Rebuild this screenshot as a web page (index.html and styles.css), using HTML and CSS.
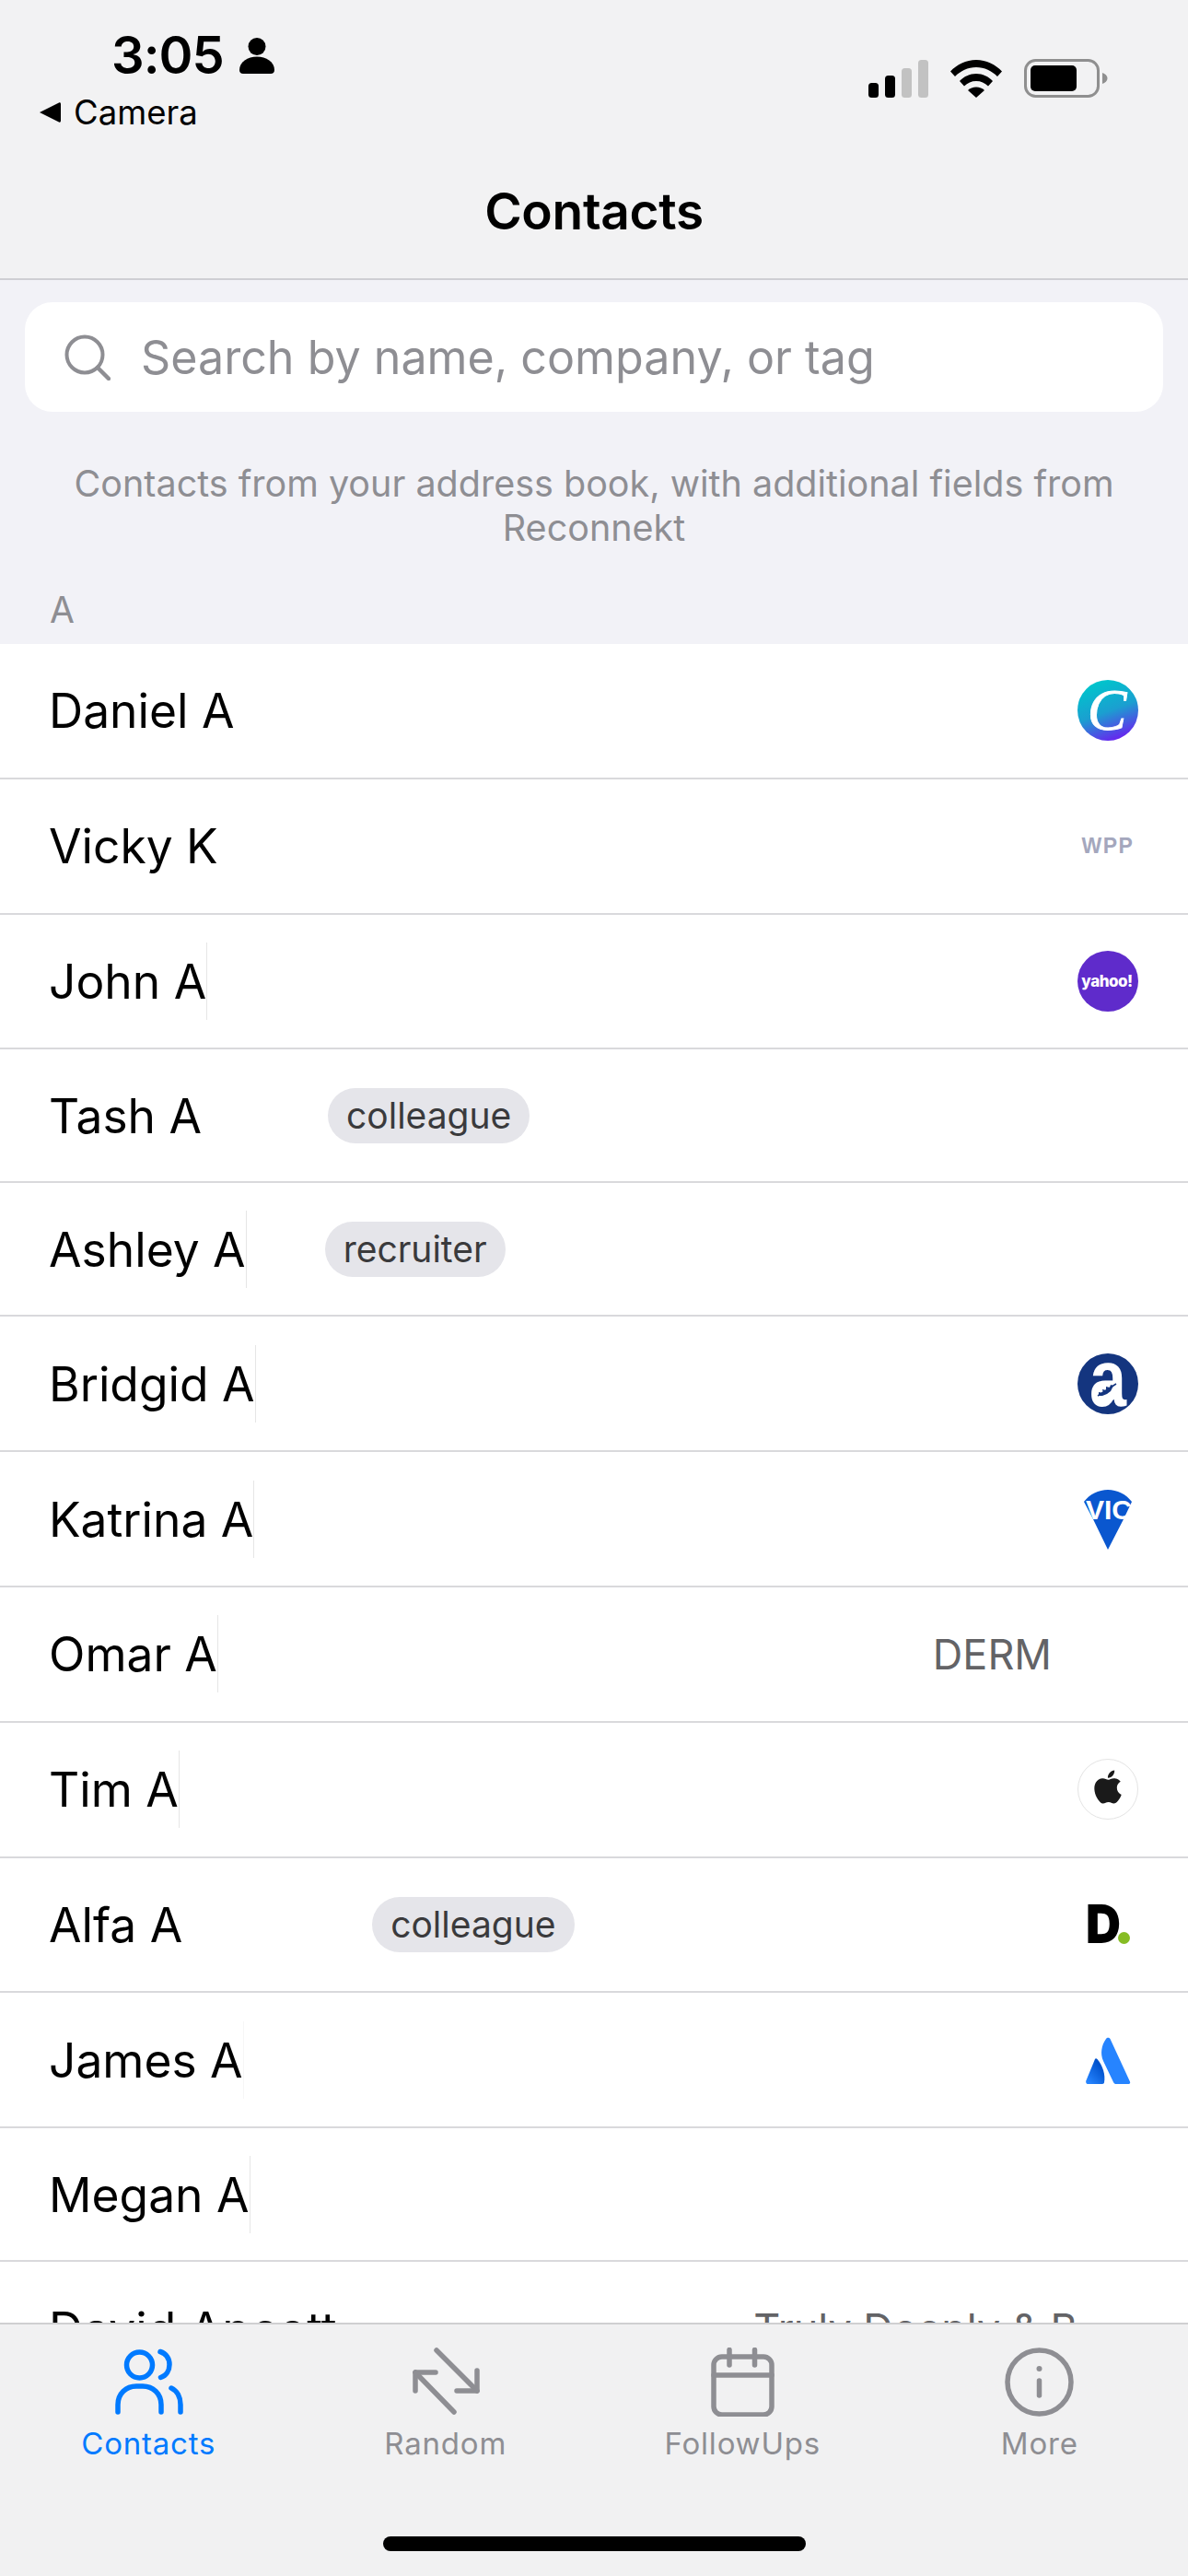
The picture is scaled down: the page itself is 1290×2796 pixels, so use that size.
FILE: index.html
```html
<!DOCTYPE html>
<html>
<head>
  <meta charset="UTF-8" />
  <title>Contacts</title>
  <link rel="stylesheet" href="styles.css">
</head>
<body>
<div class="app">
  <header class="top">
    <div class="status">
      <div class="status-left">
        <div class="time-line">
          <span class="time">3:05</span>
          <svg class="person" viewBox="0 0 38 40"><circle cx="19" cy="10.5" r="9.5" fill="#000"/><path d="M0 36c0-9 9-14.500 19-14.500S38 27 38 36c0 2.500-1.500 4-4 4H4c-2.500 0-4-1.500-4-4z" fill="#000"/></svg>
        </div>
        <div class="back-line">
          <svg class="back-arrow" viewBox="0 0 24 24"><path d="M1 12 22 1.500c1-.5 2 0 2 1.500v18c0 1.500-1 2-2 1.500z" fill="#000"/></svg>
          <span class="back-text">Camera</span>
        </div>
      </div>
      <div class="status-right">
        <svg class="signal" viewBox="0 0 65 41">
          <rect x="0" y="25" width="11" height="16" rx="3.500" fill="#000"/>
          <rect x="18" y="17" width="11" height="24" rx="3.500" fill="#000"/>
          <rect x="36" y="9" width="11" height="32" rx="3.500" fill="#c2c2c2"/>
          <rect x="54" y="0" width="11" height="41" rx="3.500" fill="#c2c2c2"/>
        </svg>
        <svg class="wifi" viewBox="0 0 56 41">
          <path d="M0 12.500C7 5 17 0 28 0s21 5 28 12.500l-5 5.500C45 12 37 8 28 8S11 12 5 18z" fill="#000"/>
          <path d="M10 23c4.500-5 11-8 18-8s13.500 3 18 8l-5 5.500c-3.500-3.500-8-5.500-13-5.500s-9.500 2-13 5.500z" fill="#000"/>
          <path d="M19 33c2.200-2.300 5.500-3.500 9-3.500s6.800 1.200 9 3.500l-9 8z" fill="#000"/>
        </svg>
        <svg class="battery" viewBox="0 0 91 42">
          <rect x="1.500" y="1.500" width="79" height="39" rx="11" fill="none" stroke="#8f8f8f" stroke-width="3"/>
          <rect x="7" y="7" width="50" height="28" rx="5" fill="#000"/>
          <path d="M85 15c3 1 5.500 3 5.500 6s-2.500 5-5.500 6z" fill="#8f8f8f"/>
        </svg>
      </div>
    </div>
    <h1 class="title">Contacts</h1>
  </header>

  <main class="content">
    <div class="search">
      <svg class="search-icon" viewBox="0 0 50 50"><circle cx="22" cy="22" r="19.500" fill="none" stroke="#8e8e93" stroke-width="4"/><path d="M36 36 48 48" stroke="#8e8e93" stroke-width="4.500" stroke-linecap="round"/></svg>
      <span class="search-text">Search by name, company, or tag</span>
    </div>
    <p class="hint">Contacts from your address book, with additional fields from Reconnekt</p>
    <div class="section">A</div>

    <ul class="list">
      <li class="row">
        <span class="name">Daniel A</span>
        <svg class="logo" viewBox="0 0 66 66">
          <defs><linearGradient id="canva" x1="0.3" y1="0.05" x2="0.65" y2="1"><stop offset="0" stop-color="#00c4cc"/><stop offset="0.5" stop-color="#1b9fd0"/><stop offset="1" stop-color="#6a20f0"/></linearGradient></defs>
          <circle cx="33" cy="33" r="33" fill="url(#canva)"/>
          <text x="32" y="54" class="logo-canva">C</text>
        </svg>
      </li>
      <li class="row">
        <span class="name">Vicky K</span>
        <svg class="logo" viewBox="0 0 66 66"><text x="33" y="41" class="logo-wpp">WPP</text></svg>
      </li>
      <li class="row">
        <span class="name cut">John A</span>
        <svg class="logo" viewBox="0 0 66 66">
          <circle cx="33" cy="33" r="33" fill="#5f2bcb"/>
          <text x="32" y="39" class="logo-yahoo">yahoo!</text>
        </svg>
      </li>
      <li class="row row-short">
        <span class="name">Tash A</span>
        <span class="tag tag-tash">colleague</span>
      </li>
      <li class="row row-short">
        <span class="name cut">Ashley A</span>
        <span class="tag tag-ashley">recruiter</span>
      </li>
      <li class="row">
        <span class="name cut">Bridgid A</span>
        <svg class="logo" viewBox="0 0 66 66">
          <circle cx="33" cy="33" r="33" fill="#14357f"/>
          <text x="13" y="57" class="logo-a" textLength="40" lengthAdjust="spacingAndGlyphs">a</text>
          <ellipse cx="31" cy="43" rx="12" ry="10" fill="#fff"/>
          <path d="M22 46 42 33" stroke="#14357f" stroke-width="1.500"/>
          <path d="M23 42l5 1-1-4 4 1v-4l4 1 1-3 3 1-3 6-4 3-5 2-4 0z" fill="#14357f"/>
        </svg>
      </li>
      <li class="row">
        <span class="name cut">Katrina A</span>
        <svg class="logo" viewBox="0 0 66 66">
          <path d="M7 14C13 6 23 1 33 1s20 5 26 13L50 33 33 66 17 33z" fill="#0a57cf"/>
          <text x="34" y="33" class="logo-vic">VIC</text>
        </svg>
      </li>
      <li class="row">
        <span class="name cut">Omar A</span>
        <span class="company">DERM</span>
        <span class="logo"></span>
      </li>
      <li class="row">
        <span class="name cut">Tim A</span>
        <svg class="logo" viewBox="0 0 66 66">
          <circle cx="33" cy="33" r="32.500" fill="#fff" stroke="#e4e4e4" stroke-width="1"/>
          <svg x="15" y="12" width="36" height="37" viewBox="0 0 24 24"><path d="M12.152 6.896c-.948 0-2.415-1.078-3.960-1.040-2.040.027-3.910 1.183-4.961 3.014-2.117 3.675-.546 9.103 1.519 12.090 1.013 1.454 2.208 3.090 3.792 3.039 1.520-.065 2.090-.987 3.935-.987 1.831 0 2.350.987 3.960.948 1.637-.026 2.676-1.480 3.676-2.948 1.156-1.688 1.636-3.325 1.662-3.415-.039-.013-3.182-1.221-3.220-4.857-.026-3.040 2.480-4.494 2.597-4.559-1.429-2.090-3.623-2.324-4.390-2.376-2-.156-3.675 1.090-4.610 1.090zM15.530 3.830c.843-1.012 1.400-2.427 1.245-3.830-1.207.052-2.662.805-3.532 1.818-.780.896-1.454 2.338-1.273 3.714 1.338.104 2.715-.688 3.559-1.701" fill="#1a1a1a"/></svg>
        </svg>
      </li>
      <li class="row">
        <span class="name">Alfa A</span>
        <span class="tag tag-alfa">colleague</span>
        <svg class="logo" viewBox="0 0 66 66">
          <text x="9" y="53" class="logo-d" textLength="38" lengthAdjust="spacingAndGlyphs">D</text>
          <circle cx="50.500" cy="47.500" r="6.500" fill="#86bc24"/>
        </svg>
      </li>
      <li class="row">
        <span class="name cut faint">James A</span>
        <svg class="logo" viewBox="0 0 66 66">
          <defs><linearGradient id="atl" x1="0.8" y1="0.3" x2="0.2" y2="1"><stop offset="0" stop-color="#0052cc"/><stop offset="1" stop-color="#2684ff"/></linearGradient></defs>
          <path d="M19 32 9.300 55.500c-.5 1.500.2 3.500 1.700 3.500H27c1.200 0 1.800-.7 2-1.700 1.500-8-1.500-18.500-7.500-25.300-1-1-2-1-2.500 0z" fill="url(#atl)"/>
          <path d="M31 10c-5 7-6.500 16-3 24l11 23c.5 1.300 1.500 2 2.500 2H55.500c1.500 0 2-1.200 1.500-2.400L35.500 10c-1-1.700-3.500-1.700-4.500 0z" fill="#2684ff"/>
        </svg>
      </li>
      <li class="row row-short">
        <span class="name cut">Megan A</span>
      </li>
      <li class="row">
        <span class="name">David Apcott</span>
        <span class="company company-long">Truly Deeply &amp; B</span>
      </li>
    </ul>
  </main>

  <nav class="tabs">
    <div class="tab tab-on">
      <svg class="tab-icon" viewBox="0 0 75 75" fill="none" stroke="#007aff" stroke-width="5.500" stroke-linecap="round">
        <circle cx="27.500" cy="19" r="14"/>
        <path d="M50 4.500c6.500 2 10 7.500 10 14 0 6.500-3.500 12-9.500 14"/>
        <path d="M4 70V62C4 50 13 42 24 42h7c11 0 20 8 20 20v8"/>
        <path d="M62 44c6.500 3 10 10 10 18v8"/>
      </svg>
      <span class="tab-label">Contacts</span>
    </div>
    <div class="tab">
      <svg class="tab-icon" viewBox="0 0 75 75" fill="none" stroke="#8e8e93" stroke-width="5.500" stroke-linecap="round" stroke-linejoin="round">
        <path d="M28 3 72 47"/>
        <path d="M72 25V47H50"/>
        <path d="M47 70 5 27"/>
        <path d="M5 47V27H27"/>
      </svg>
      <span class="tab-label">Random</span>
    </div>
    <div class="tab">
      <svg class="tab-icon" viewBox="0 0 75 75" fill="none" stroke="#8e8e93" stroke-width="5.500" stroke-linecap="round">
        <rect x="6" y="10" width="63" height="63" rx="9"/>
        <path d="M6 30H69"/>
        <path d="M23 2.500V19"/>
        <path d="M50.500 2.500V19"/>
      </svg>
      <span class="tab-label">FollowUps</span>
    </div>
    <div class="tab">
      <svg class="tab-icon" viewBox="0 0 75 75" fill="none" stroke="#8e8e93" stroke-width="5.500" stroke-linecap="round">
        <circle cx="37.500" cy="37.500" r="34.500"/>
        <path d="M37.500 36V52"/>
        <circle cx="37.500" cy="23" r="3" fill="#8e8e93" stroke="none"/>
      </svg>
      <span class="tab-label">More</span>
    </div>
    <div class="home-bar"></div>
  </nav>
</div>
</body>
</html>
```

FILE: styles.css
```css
* {
  box-sizing: border-box;
}

html, body {
  margin: 0;
  padding: 0;
}

body {
  font-family: Inter, "Liberation Sans", sans-serif;
  color: #000;
  background-color: #f2f2f7;
}

.app {
  width: 1290px;
  height: 2796px;
  display: flex;
  flex-direction: column;
  overflow: hidden;
}

/* Top bar */
.top {
  height: 304px;
  flex: none;
  background-color: #f2f2f3;
  border-bottom: 2px solid #cfcfd3;
}

.status {
  height: 148px;
  display: flex;
  justify-content: space-between;
}

.status-left {
  padding: 32px 0 0 42px;
}

.time-line {
  display: flex;
  align-items: center;
  height: 56px;
  padding-left: 79px;
}

.time {
  font-size: 56px;
  font-weight: 600;
  letter-spacing: -1px;
}

.person {
  width: 38px;
  height: 40px;
  margin-left: 17px;
}

.back-line {
  display: flex;
  align-items: center;
  height: 44px;
  margin-top: 12px;
}

.back-arrow {
  width: 24px;
  height: 24px;
}

.back-text {
  font-size: 36.5px;
  margin-left: 14px;
}

.status-right {
  display: flex;
  align-items: flex-start;
  padding: 64px 87px 0 0;
}

.signal {
  width: 65px;
  height: 41px;
  margin-top: 1px;
}

.wifi {
  width: 56px;
  height: 41px;
  margin: 1px 0 0 24px;
}

.battery {
  width: 91px;
  height: 42px;
  margin-left: 24px;
}

.title {
  margin: 0;
  font-size: 55px;
  font-weight: 600;
  line-height: 64px;
  text-align: center;
  padding-top: 49px;
  letter-spacing: -0.3px;
}

/* Search and list */
.content {
  flex: 1;
  min-height: 0;
  overflow: hidden;
  background-color: #f2f2f7;
  padding-top: 24px;
}

.search {
  display: flex;
  align-items: center;
  height: 119px;
  margin: 0 27px;
  padding-left: 43px;
  background-color: #fff;
  border-radius: 30px;
}

.search-icon {
  width: 50px;
  height: 50px;
}

.search-text {
  font-size: 50.2px;
  color: #8e8e93;
  margin-left: 33px;
}

.hint {
  margin: 54px 40px 0 40px;
  font-size: 39.5px;
  line-height: 48px;
  text-align: center;
  color: #8e8e93;
}

.section {
  margin-top: 41px;
  padding-left: 54px;
  font-size: 39px;
  line-height: 48px;
  color: #8e8e93;
  height: 61px;
}

.list {
  list-style: none;
  margin: 0;
  padding: 0;
  background-color: #fff;
}

.row {
  display: flex;
  align-items: center;
  height: 146.8px;
  padding: 0 54px 0 53px;
  border-bottom: 2px solid #d9d9dc;
}

.row-short {
  height: 145px;
}

.name {
  font-size: 51.5px;
  line-height: 84px;
  white-space: nowrap;
}

.cut {
  border-right: 1px solid #e6e6e6;
}

.faint {
  border-right-color: #f6f6f6;
}

.tag {
  height: 60px;
  line-height: 60px;
  padding: 0 20px;
  font-size: 39px;
  color: #3a3a3c;
  background-color: #e5e5ea;
  border-radius: 30px;
}

.tag-tash {
  margin-left: 137px;
}

.tag-ashley {
  margin-left: 85px;
}

.tag-alfa {
  margin-left: 206px;
}

.company {
  margin-left: auto;
  margin-right: 28px;
  font-size: 45px;
  color: #636366;
}

.company-long {
  margin-right: 66px;
}

.logo {
  display: block;
  flex: none;
  width: 66px;
  height: 66px;
  margin-left: auto;
  overflow: visible;
}

.company + .logo {
  margin-left: 0;
}

.logo-canva {
  font-family: "Liberation Serif", serif;
  font-style: italic;
  font-size: 64px;
  fill: #fff;
  stroke: #fff;
  stroke-width: 0.8px;
  text-anchor: middle;
}

.logo-wpp {
  font-family: "Liberation Sans", sans-serif;
  font-weight: 700;
  font-size: 23px;
  letter-spacing: 1.5px;
  fill: #a4a7bd;
  text-anchor: middle;
}

.logo-yahoo {
  font-family: Inter, sans-serif;
  font-weight: 800;
  font-size: 17px;
  letter-spacing: -0.5px;
  fill: #fff;
  text-anchor: middle;
}

.logo-a {
  font-family: "Liberation Sans", sans-serif;
  font-weight: 700;
  font-size: 88px;
  fill: #fff;
}

.logo-vic {
  font-family: "Liberation Sans", sans-serif;
  font-weight: 700;
  font-size: 30px;
  fill: #fff;
  text-anchor: middle;
}

.logo-d {
  font-family: Inter, sans-serif;
  font-weight: 900;
  font-size: 58px;
  fill: #000;
}

/* Tab bar */
.tabs {
  position: relative;
  height: 275px;
  flex: none;
  display: grid;
  grid-template-columns: repeat(4, 1fr);
  align-items: start;
  background-color: #f1f1f2;
  border-top: 2px solid #cfcfd1;
  padding-top: 25px;
}

.tab {
  display: flex;
  flex-direction: column;
  align-items: center;
  color: #8e8e93;
}

.tab-on {
  color: #007aff;
}

.tab-icon {
  width: 75px;
  height: 75px;
}

.tab-label {
  font-size: 33px;
  line-height: 40px;
  margin-top: 9px;
  letter-spacing: 0.8px;
}

.home-bar {
  position: absolute;
  left: 416px;
  top: 230px;
  width: 459px;
  height: 16px;
  border-radius: 8px;
  background-color: #000;
}
```
